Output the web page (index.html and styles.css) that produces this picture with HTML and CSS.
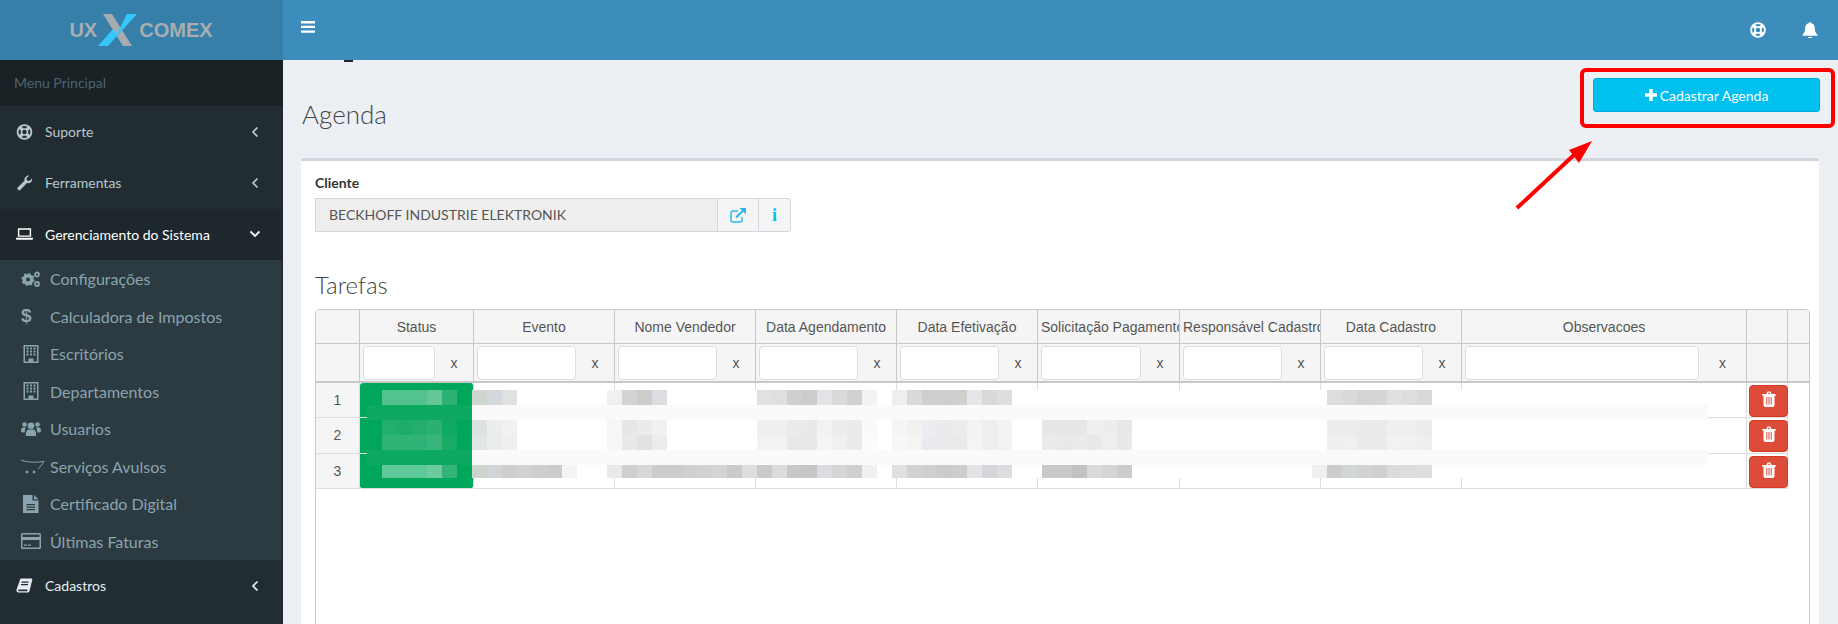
FILE: index.html
```html
<!DOCTYPE html>
<html lang="en">
<head>
  <meta charset="UTF-8">
  <title>Agenda</title>
  <link rel="stylesheet" href="styles.css">
</head>
<body>
  <svg class="defs" width="0" height="0">
    <symbol id="i-ring" viewBox="0 0 16 16">
      <circle cx="8" cy="8" r="6.9" fill="none" stroke="currentColor" stroke-width="1.9"/>
      <circle cx="8" cy="8" r="3" fill="none" stroke="currentColor" stroke-width="1.5"/>
      <path d="M3 3l3 3M13 3l-3 3M3 13l3-3M13 13l-3-3" stroke="currentColor" stroke-width="3.2"/>
    </symbol>
    <symbol id="i-building" viewBox="0 0 15 18">
      <path fill="currentColor" fill-rule="evenodd" d="M0 0h15v18H0zM1.5 1.5v15H5v-3h5v3h3.5v-15z"/>
      <path fill="currentColor" d="M3 2.500h2v2H3zM6.500 2.500h2v2h-2zM10 2.500h2v2h-2zM3 5.500h2v2H3zM6.500 5.500h2v2h-2zM10 5.500h2v2h-2zM3 8.500h2v2H3zM6.500 8.500h2v2h-2zM10 8.500h2v2h-2z"/>
    </symbol>
    <symbol id="i-left" viewBox="0 0 8 12">
      <path d="M6.500 1.500L2 6l4.500 4.500" fill="none" stroke="currentColor" stroke-width="1.700"/>
    </symbol>
    <symbol id="i-trash" viewBox="0 0 14 16">
      <path fill="currentColor" fill-rule="evenodd" d="M1 3h3.500l1-2.500h3l1 2.500H13a.7.7 0 010 1.800h-.5V14a2 2 0 01-2 2h-7a2 2 0 01-2-2V4.800H1A.7.7 0 011 3zM6 2.900h2L7.600 1.800H6.400zM4.300 6v7.500h1V6zM6.500 6v7.500h1V6zM8.700 6v7.500h1V6z"/>
    </symbol>
  </svg>

  <div class="app">
    <aside class="sidebar">
      <div class="logo">
        <span class="logo-txt">UX</span>
        <svg class="logo-x" viewBox="0 0 40 32" width="40" height="32">
          <path fill="#a7abae" d="M5 0h9l20 32h-9z"/>
          <path fill="#35c6fa" d="M29 0h10L10 32H0l15-17 4 5z"/>
        </svg>
        <span class="logo-txt">COMEX</span>
      </div>
      <div class="menu-header">Menu Principal</div>
      <a class="item">
        <svg class="ico"><use href="#i-ring"/></svg>
        <span class="label">Suporte</span>
        <svg class="chev"><use href="#i-left"/></svg>
      </a>
      <a class="item">
        <svg class="ico" viewBox="0 0 16 16"><path fill="currentColor" d="M15.600 3.400c.4 2.300-1.200 4.500-3.600 4.800-.6.100-1.100 0-1.600-.1l-6.400 6.600a1.800 1.800 0 01-2.600-2.500l6.600-6.500c-.6-2.500 1.400-5.300 4.800-5.200L10 3.200l.4 2.300 2.300.4z"/></svg>
        <span class="label">Ferramentas</span>
        <svg class="chev"><use href="#i-left"/></svg>
      </a>
      <a class="item active">
        <svg class="ico" viewBox="0 0 18 16"><path fill="currentColor" fill-rule="evenodd" d="M2 2h14v9H2zM3.500 3.500v6h11v-6zM0 12h18v1.200c0 .5-.4.800-1 .800H1c-.6 0-1-.3-1-.8z"/></svg>
        <span class="label">Gerenciamento do Sistema</span>
        <svg class="chev down" viewBox="0 0 12 8"><path d="M1.500 1.500L6 6l4.500-4.500" fill="none" stroke="currentColor" stroke-width="1.800"/></svg>
      </a>
      <div class="submenu">
        <a class="sub">
          <svg class="sub-ico" viewBox="0 0 20 16"><g fill="none" stroke="currentColor"><circle cx="7" cy="8.500" r="3.800" stroke-width="3.500"/><circle cx="7" cy="8.500" r="5.800" stroke-width="1.600" stroke-dasharray="2.200 2.300"/><circle cx="16" cy="3.500" r="2" stroke-width="1.800"/><circle cx="16" cy="13" r="2" stroke-width="1.800"/></g></svg>
          Configurações
        </a>
        <a class="sub"><span class="sub-ico dollar">$</span>Calculadora de Impostos</a>
        <a class="sub"><svg class="sub-ico"><use href="#i-building"/></svg>Escritórios</a>
        <a class="sub"><svg class="sub-ico"><use href="#i-building"/></svg>Departamentos</a>
        <a class="sub">
          <svg class="sub-ico" viewBox="0 0 20 16"><g fill="currentColor"><circle cx="10" cy="4.800" r="3.300"/><circle cx="3.500" cy="3.500" r="2.300"/><circle cx="16.500" cy="3.500" r="2.300"/><path d="M5 15c-.6-4 1-6.500 2.500-6.500h5c1.500 0 3.100 2.500 2.500 6.500zM0 10c0-2 .8-3.500 2-3.500h3C4 8 3.700 9.800 3.800 11.500 1.500 11.500 0 11 0 10zM20 10c0-2-.8-3.500-2-3.500h-3c1 1.500 1.300 3.300 1.200 5 2.300 0 3.800-.5 3.800-1.500z"/></g></svg>
          Usuarios
        </a>
        <a class="sub">
          <svg class="sub-ico cart" viewBox="0 0 24 16"><path d="M0 2c5 2 12 3 23 1.500-2 3-4.500 6-6 7.500" fill="none" stroke="currentColor" stroke-width="1"/><circle cx="6" cy="14" r="1.300" fill="currentColor"/><circle cx="13" cy="14" r="1.300" fill="currentColor"/></svg>
          Serviços Avulsos
        </a>
        <a class="sub">
          <svg class="sub-ico" viewBox="0 0 16 18"><path fill="currentColor" fill-rule="evenodd" d="M0 0h9.500v5.500H15.500V18H0zM3.500 9v1.300h8.500V9zM3.500 11.500v1.300h8.500v-1.300zM3.500 14v1.300h8.500V14zM11 0l4.500 4.200H11z"/></svg>
          Certificado Digital
        </a>
        <a class="sub">
          <svg class="sub-ico" viewBox="0 0 20 16"><path fill="currentColor" fill-rule="evenodd" d="M1.500 0h17A1.500 1.500 0 0120 1.500v13a1.500 1.500 0 01-1.500 1.500h-17A1.500 1.500 0 010 14.500v-13A1.500 1.500 0 011.500 0zM1.500 1.500v2.500h17V1.500zM1.500 7v7.500h17V7zM3 11.500h3v1.200H3zM7 11.500h3v1.200H7z"/></svg>
          Últimas Faturas
        </a>
      </div>
      <a class="item bright">
        <svg class="ico" viewBox="0 0 16 16"><path fill="currentColor" fill-rule="evenodd" d="M4 .5h11c.7 0 1 .6.800 1.300L13 13c-.2.800-.8 1.500-1.800 1.500H2c-1.300 0-2.300-1-2-2.500.1-.7.400-1.500.7-2.300zM5 3.500v1.200h7V3.500zM4.500 6v1.200h7V6zM2 11.500c-.6 1.200-.2 1.800.5 1.800h8.200l.4-1.800z"/></svg>
        <span class="label">Cadastros</span>
        <svg class="chev"><use href="#i-left"/></svg>
      </a>
    </aside>

    <div class="main">
      <header class="topbar">
        <svg class="burger" viewBox="0 0 14 12"><path d="M0 0h14v2.400H0zM0 4.700h14v2.400H0zM0 9.400h14v2.400H0z" fill="#fff"/></svg>
        <div class="top-icons">
          <svg class="top-ico"><use href="#i-ring"/></svg>
          <svg class="top-ico" viewBox="0 0 16 16"><path fill="currentColor" d="M8 0a1 1 0 011 1.100c2.500.5 3.800 2.400 3.800 4.900 0 3.500 1 5 2.700 6.700v1H.5v-1C2.200 11 3.200 9.500 3.200 6c0-2.500 1.300-4.400 3.800-4.900A1 1 0 018 0zM6 15h4a2 2 0 01-4 0z"/></svg>
        </div>
      </header>

      <div class="content">
        <div class="crumb"></div>
        <div class="page-head">
          <h1>Agenda</h1>
          <button class="btn-new">
            <svg viewBox="0 0 12 12" width="12" height="12"><path fill="#fff" d="M4.300 0h3.400v4.300H12v3.400H7.700V12H4.300V7.700H0V4.300h4.300z"/></svg>
            Cadastrar Agenda
          </button>
        </div>

        <section class="box">
          <label class="field-label">Cliente</label>
          <div class="input-group">
            <div class="input-ro">BECKHOFF INDUSTRIE ELEKTRONIK</div>
            <span class="addon link">
              <svg viewBox="0 0 16 15" width="16" height="15"><path fill="none" stroke="#29b9ee" stroke-width="1.500" d="M12 9v3.500a1.500 1.500 0 01-1.500 1.500h-8A1.500 1.500 0 011 12.500v-8A1.500 1.500 0 012.500 3H8"/><path fill="none" stroke="#29b9ee" stroke-width="2" d="M6 9.500L13.500 2.200"/><path fill="#29b9ee" d="M9.500 0H16v6.500z"/></svg>
            </span>
            <span class="addon info">i</span>
          </div>

          <h2>Tarefas</h2>

          <div class="grid">
            <table>
              <colgroup>
                <col class="c-num"><col class="c-status"><col class="c-std"><col class="c-std"><col class="c-std"><col class="c-std"><col class="c-142"><col class="c-std"><col class="c-std"><col class="c-obs"><col class="c-del"><col class="c-end">
              </colgroup>
              <thead>
                <tr class="titles">
                  <th></th><th>Status</th><th>Evento</th><th>Nome Vendedor</th><th>Data Agendamento</th><th>Data Efetivação</th><th class="tight">Solicitação Pagamento</th><th class="tight">Responsável Cadastro</th><th>Data Cadastro</th><th>Observacoes</th><th></th><th class="last"></th>
                </tr>
                <tr class="filters">
                  <th></th>
                  <th><div class="flt"><input type="text"><span>x</span></div></th>
                  <th><div class="flt"><input type="text"><span>x</span></div></th>
                  <th><div class="flt"><input type="text"><span>x</span></div></th>
                  <th><div class="flt"><input type="text"><span>x</span></div></th>
                  <th><div class="flt"><input type="text"><span>x</span></div></th>
                  <th><div class="flt"><input type="text"><span>x</span></div></th>
                  <th><div class="flt"><input type="text"><span>x</span></div></th>
                  <th><div class="flt"><input type="text"><span>x</span></div></th>
                  <th><div class="flt wide"><input type="text"><span>x</span></div></th>
                  <th></th>
                  <th class="last"></th>
                </tr>
              </thead>
              <tbody>
                <tr>
                  <td class="num">1</td><td class="st st-first"></td><td></td><td></td><td></td><td></td><td></td><td></td><td></td><td></td>
                  <td class="del"><button class="btn-del"><svg><use href="#i-trash"/></svg></button></td><td class="last"></td>
                </tr>
                <tr>
                  <td class="num">2</td><td class="st"></td><td></td><td></td><td></td><td></td><td></td><td></td><td></td><td></td>
                  <td class="del"><button class="btn-del"><svg><use href="#i-trash"/></svg></button></td><td class="last"></td>
                </tr>
                <tr>
                  <td class="num">3</td><td class="st st-last"></td><td></td><td></td><td></td><td></td><td></td><td></td><td></td><td></td>
                  <td class="del"><button class="btn-del"><svg><use href="#i-trash"/></svg></button></td><td class="last"></td>
                </tr>
              </tbody>
            </table>

            <!-- pixelated block that hides the row data -->
            <svg class="mosaic" viewBox="316 313 1493 200" width="1493" height="200">
              <path fill="#fff" d="M472 393h1005v88H472z"/>
              <path fill="#0da960" d="M367 408h105v15H367zM367 453h105v15H367z"/>
              <path fill="#fafafa" d="M472 408h1236v15H472zM472 453h1236v15H472z"/>
              <g transform="translate(0 393)">
                <rect x="382" fill="#52c28f"/><rect x="397" fill="#52c28f"/><rect x="412" fill="#52c28f"/><rect x="427" fill="#63c797"/><rect x="442" fill="#2eb274"/>
                <rect x="472" fill="#cdd6ce"/><rect x="487" fill="#d5d8dc"/><rect x="502" fill="#dfe2e1"/>
                <rect x="607" fill="#f0f0ef"/><rect x="622" fill="#d2d3d3"/><rect x="637" fill="#cdccc9"/><rect x="652" fill="#dcdde0"/>
                <rect x="757" fill="#e0e1e1"/><rect x="772" fill="#dfdfdd"/><rect x="787" fill="#cfcfcd"/><rect x="802" fill="#cccccb"/><rect x="817" fill="#e2e3e6"/><rect x="832" fill="#dadad8"/><rect x="847" fill="#d1d1d0"/><rect x="862" fill="#f2f3f5"/>
                <rect x="892" fill="#efedee"/><rect x="907" fill="#dadada"/><rect x="922" fill="#d0cfcf"/><rect x="937" fill="#cfcecd"/><rect x="952" fill="#d0cfce"/><rect x="967" fill="#e4e6e9"/><rect x="982" fill="#d9d9da"/><rect x="997" fill="#dddee0"/>
                <rect x="1327" fill="#dcdedd"/><rect x="1342" fill="#d9dad9"/><rect x="1357" fill="#d4d4d3"/><rect x="1372" fill="#d5d5d5"/><rect x="1387" fill="#dfe0df"/><rect x="1402" fill="#dedddb"/><rect x="1417" fill="#d8d9db"/>
              </g>
              <g transform="translate(0 423)">
                <rect x="382" fill="#24ae6e"/><rect x="397" fill="#1dac6b"/><rect x="412" fill="#24ae6e"/><rect x="427" fill="#2cb072"/><rect x="442" fill="#10a964"/>
                <rect x="472" fill="#dce3de"/><rect x="487" fill="#ecedef"/><rect x="502" fill="#f0f1f1"/>
                <rect x="607" fill="#f6f6f6"/><rect x="622" fill="#e7e7e8"/><rect x="637" fill="#ecebea"/><rect x="652" fill="#f0f1f3"/>
                <rect x="757" fill="#eef0f0"/><rect x="772" fill="#eef0f0"/><rect x="787" fill="#eaebeb"/><rect x="802" fill="#e9e9e9"/><rect x="817" fill="#f1f2f3"/><rect x="832" fill="#ededed"/><rect x="847" fill="#ebebea"/><rect x="862" fill="#fafafb"/>
                <rect x="892" fill="#f5f5f5"/><rect x="907" fill="#f1f1f0"/><rect x="922" fill="#ebedf0"/><rect x="937" fill="#e9ebed"/><rect x="952" fill="#ebeded"/><rect x="967" fill="#f3f3f4"/><rect x="982" fill="#eeeeed"/><rect x="997" fill="#f1f2f4"/>
                <rect x="1042" fill="#e7e7e7"/><rect x="1057" fill="#e7e7e7"/><rect x="1072" fill="#e6e6e6"/><rect x="1087" fill="#efefef"/><rect x="1102" fill="#ededed"/><rect x="1117" fill="#e8e8e8"/>
                <rect x="1327" fill="#ebeded"/><rect x="1342" fill="#ebeded"/><rect x="1357" fill="#eaebeb"/><rect x="1372" fill="#eaebeb"/><rect x="1387" fill="#efefef"/><rect x="1402" fill="#eeefef"/><rect x="1417" fill="#ebecec"/>
              </g>
              <g transform="translate(0 438)">
                <rect x="382" fill="#2fb276"/><rect x="397" fill="#31b277"/><rect x="412" fill="#2fb276"/><rect x="427" fill="#38b57c"/><rect x="442" fill="#17ab66"/>
                <rect x="472" fill="#e0e6e1"/><rect x="487" fill="#ebecee"/><rect x="502" fill="#eef0ef"/>
                <rect x="607" fill="#f6f6f5"/><rect x="622" fill="#e8eaea"/><rect x="637" fill="#e3e2e0"/><rect x="652" fill="#ebecee"/>
                <rect x="757" fill="#f3f3f3"/><rect x="772" fill="#f3f3f1"/><rect x="787" fill="#e8e9e9"/><rect x="802" fill="#e7e8e8"/><rect x="817" fill="#f3f4f4"/><rect x="832" fill="#f0f0ee"/><rect x="847" fill="#ebebea"/><rect x="862" fill="#fbfbfb"/>
                <rect x="892" fill="#f7f7f7"/><rect x="907" fill="#f4f4f2"/><rect x="922" fill="#e9ebee"/><rect x="937" fill="#e8eaeb"/><rect x="952" fill="#e9ebeb"/><rect x="967" fill="#f4f4f5"/><rect x="982" fill="#edefef"/><rect x="997" fill="#f0f2f4"/>
                <rect x="1042" fill="#ebebeb"/><rect x="1057" fill="#e9e9e9"/><rect x="1072" fill="#ebebeb"/><rect x="1087" fill="#e9e9e9"/><rect x="1102" fill="#eeeeee"/><rect x="1117" fill="#e9e9e9"/>
                <rect x="1327" fill="#efefef"/><rect x="1342" fill="#f0f0f0"/><rect x="1357" fill="#ebebeb"/><rect x="1372" fill="#ebebeb"/><rect x="1387" fill="#f2f2f2"/><rect x="1402" fill="#f1f1f1"/><rect x="1417" fill="#eeeeee"/>
              </g>
              <g class="short" transform="translate(0 468)">
                <rect x="382" fill="#5fc898"/><rect x="397" fill="#5fc898"/><rect x="412" fill="#5fc898"/><rect x="427" fill="#6dcc9f"/><rect x="442" fill="#33b378"/>
                <rect x="472" fill="#cdd6ce"/><rect x="487" fill="#d2d4d7"/><rect x="502" fill="#cfcecc"/><rect x="517" fill="#d1d2d5"/><rect x="532" fill="#cfcdcd"/><rect x="547" fill="#cdccca"/><rect x="562" fill="#f2f4f6"/>
                <rect x="607" fill="#e9e9e8"/><rect x="622" fill="#cfcfcf"/><rect x="637" fill="#d7d8db"/><rect x="652" fill="#cdcccb"/><rect x="667" fill="#cdcccb"/><rect x="682" fill="#cfcfcf"/><rect x="697" fill="#d2d2d4"/><rect x="712" fill="#d6d3d2"/><rect x="727" fill="#c9cace"/><rect x="742" fill="#dfdedc"/>
                <rect x="757" fill="#cbcaca"/><rect x="772" fill="#dcdcdc"/><rect x="787" fill="#c8c8c8"/><rect x="802" fill="#c5c6c6"/><rect x="817" fill="#dcdde0"/><rect x="832" fill="#d4d6d6"/><rect x="847" fill="#cfcfcf"/><rect x="862" fill="#eff0f2"/>
                <rect x="892" fill="#e0e0e0"/><rect x="907" fill="#d2d2d2"/><rect x="922" fill="#cfcfcf"/><rect x="937" fill="#cbcbca"/><rect x="952" fill="#cdcdcb"/><rect x="967" fill="#e1e3e6"/><rect x="982" fill="#d5d6d9"/><rect x="997" fill="#dcddde"/>
                <rect x="1042" fill="#c9c9c9"/><rect x="1057" fill="#c9c9c9"/><rect x="1072" fill="#c2c2c3"/><rect x="1087" fill="#d9dadb"/><rect x="1102" fill="#d4d4d4"/><rect x="1117" fill="#cccccc"/>
                <rect x="1312" fill="#efefef"/><rect x="1327" fill="#cccccc"/><rect x="1342" fill="#d3d6d6"/><rect x="1357" fill="#d1d2d2"/><rect x="1372" fill="#cfd0d0"/><rect x="1387" fill="#d9dcdc"/><rect x="1402" fill="#dcdddc"/><rect x="1417" fill="#dfdfdd"/>
              </g>
            </svg>
          </div>
        </section>
      </div>
    </div>

    <!-- red annotation drawn on the screenshot -->
    <svg class="annot" viewBox="0 0 1838 624" width="1838" height="624">
      <rect x="1582" y="70" width="251" height="56" rx="4" fill="none" stroke="#f00" stroke-width="4"/>
      <path d="M1517 208l58-54" stroke="#f00" stroke-width="4" fill="none"/>
      <path fill="#f00" d="M1592 141l-23 9 10 13z"/>
    </svg>
  </div>
</body>
</html>
```

FILE: styles.css
```css
* {
  box-sizing: border-box;
}

body {
  margin: 0;
  font-family: Lato, "Noto Sans", sans-serif;
  font-size: 14px;
  color: #333;
  background: #ecf0f5;
  overflow: hidden;
}

.defs {
  display: none;
}

.app {
  position: relative;
  display: flex;
  height: 100vh;
  overflow: hidden;
}

/* sidebar */
.sidebar {
  width: 283px;
  flex-shrink: 0;
  background: #222d32;
}

.logo {
  height: 60px;
  background: #367fa9;
  display: flex;
  align-items: center;
  justify-content: center;
  gap: 1px;
  padding-right: 1px;
}

.logo-txt {
  font-family: "Liberation Sans", sans-serif;
  font-weight: bold;
  font-size: 20px;
  color: #a9adb0;
}

.menu-header {
  height: 46px;
  line-height: 46px;
  padding-left: 14px;
  background: #1a2226;
  color: #4b646f;
  font-size: 14px;
}

.item {
  display: flex;
  align-items: center;
  height: 51.3px;
  padding-left: 16px;
  color: #b8c7ce;
}

.item.active {
  background: #1e282c;
  color: #fff;
}

.item.bright {
  color: #e6edf0;
}

.ico {
  width: 17px;
  height: 16px;
  margin-right: 12px;
}

.label {
  flex: 1;
}

.chev {
  width: 8px;
  height: 12px;
  margin-right: 24px;
}

.chev.down {
  width: 12px;
  height: 8px;
  margin-right: 22px;
}

.submenu {
  background: #2c3b41;
  margin-right: 2px;
}

.sub {
  display: flex;
  align-items: center;
  height: 37.5px;
  padding-left: 21px;
  color: #8aa4af;
  font-size: 16px;
}

.sub-ico {
  width: 20px;
  height: 18px;
  margin-right: 9px;
  flex-shrink: 0;
}

.sub-ico.cart {
  width: 24px;
  margin-right: 5px;
}

.dollar {
  font-family: "Liberation Sans", sans-serif;
  font-weight: bold;
  font-size: 19px;
  line-height: 18px;
}

/* top bar */
.main {
  flex: 1;
  min-width: 0;
  display: flex;
  flex-direction: column;
}

.topbar {
  height: 60px;
  flex-shrink: 0;
  background: #3c8dbc;
  display: flex;
  align-items: center;
  justify-content: space-between;
  padding: 0 20px 6px 18px;
  position: relative;
  z-index: 1;
}

.burger {
  width: 14px;
  height: 12px;
}

.top-icons {
  display: flex;
  gap: 36px;
  color: #fff;
  padding-top: 6px;
}

.top-ico {
  width: 16px;
  height: 16px;
}

/* content */
.content {
  flex: 1;
  padding: 0 19px 0 18px;
}

.crumb {
  width: 9px;
  height: 2px;
  margin-left: 43px;
  background: #223;
}

.page-head {
  display: flex;
  justify-content: space-between;
  align-items: flex-start;
  height: 96px;
  padding-top: 16px;
}

h1 {
  margin: 20px 0 0 1px;
  font-size: 26px;
  font-weight: 300;
  color: #444;
}

.btn-new {
  width: 227px;
  height: 34px;
  margin-right: -1px;
  border: 1px solid #00acd6;
  border-radius: 3px;
  background: #00c0ef;
  color: #fff;
  font-family: inherit;
  font-size: 14px;
  display: flex;
  align-items: center;
  justify-content: center;
  gap: 3px;
}

.box {
  height: 600px;
  padding: 12px 9px 0 14px;
  background: #fff;
  border-top: 3px solid #d2d6de;
  border-radius: 3px;
}

.field-label {
  display: block;
  font-weight: bold;
  line-height: 20px;
  margin-bottom: 5px;
}

.input-group {
  display: flex;
  width: 476px;
  height: 34px;
}

.input-ro {
  flex: 1;
  padding: 0 13px;
  line-height: 32px;
  background: #eee;
  border: 1px solid #d2d6de;
  color: #555;
}

.addon {
  background: #f5f5f5;
  border: 1px solid #d2d6de;
  border-left: 0;
  display: flex;
  align-items: center;
  justify-content: center;
}

.addon.link {
  width: 41px;
}

.addon.info {
  width: 32px;
  border-radius: 0 4px 4px 0;
  color: #00c0ef;
  font-family: "Liberation Serif", serif;
  font-weight: bold;
  font-size: 18px;
}

h2 {
  margin: 39px 0 11px;
  font-size: 24px;
  line-height: 27px;
  font-weight: 300;
  color: #444;
}

/* grid */
.grid {
  position: relative;
  width: 1495px;
  height: 400px;
  border: 1px solid #c8c8c8;
  border-radius: 5px 5px 0 0;
  overflow: hidden;
  font-family: "Liberation Sans", sans-serif;
  color: #555;
}

table {
  table-layout: fixed;
  width: 1493px;
  border-collapse: separate;
  border-spacing: 0;
}

.c-num { width: 44px; }
.c-status { width: 114px; }
.c-std { width: 141px; }
.c-142 { width: 142px; }
.c-obs { width: 285px; }
.c-del { width: 41px; }
.c-end { width: 21px; }

th {
  padding: 0;
  font-weight: normal;
  background: #f5f5f5;
  border-right: 1px solid #c8c8c8;
  border-bottom: 1px solid #c8c8c8;
  overflow: hidden;
  white-space: nowrap;
}

th.last {
  border-right: 0;
}

th.tight {
  text-align: left;
  padding-left: 3px;
}

.titles th {
  height: 34px;
}

.filters th {
  height: 39px;
  border-bottom: 2px solid #c8c8c8;
}

.flt {
  display: flex;
  align-items: center;
  padding-left: 3px;
}

.flt input {
  flex: 1;
  min-width: 0;
  height: 34px;
  border: 1px solid #ddd;
  border-radius: 4px;
  background: #fff;
}

.flt span {
  width: 38px;
  text-align: center;
  padding-top: 1px;
}

.flt.wide span {
  width: 47px;
}

td {
  height: 35.3px;
  padding: 0;
  border-right: 1px solid #ddd;
  border-bottom: 1px solid #ddd;
}

td.num {
  background: #f5f5f5;
  text-align: center;
}

td.st {
  background: #00a65a;
}

td.st-first {
  border-radius: 3px 3px 0 0;
}

td.st-last {
  border-radius: 0 0 3px 3px;
}

td.last {
  border: 0;
}

td.del {
  vertical-align: top;
  padding: 2px 0 0 2px;
}

.btn-del {
  display: flex;
  align-items: center;
  justify-content: center;
  width: 39px;
  height: 32px;
  padding: 0;
  border: 1px solid #d73925;
  border-radius: 4px;
  background: #dd4b39;
  color: #fff;
}

.btn-del svg {
  width: 14px;
  height: 16px;
  margin-bottom: 4px;
}

.mosaic {
  position: absolute;
  left: 0;
  top: 0;
  pointer-events: none;
}

.mosaic rect {
  width: 15px;
  height: 15px;
}

.mosaic .short rect {
  height: 13px;
}

.annot {
  position: absolute;
  left: 0;
  top: 0;
  pointer-events: none;
}
```
